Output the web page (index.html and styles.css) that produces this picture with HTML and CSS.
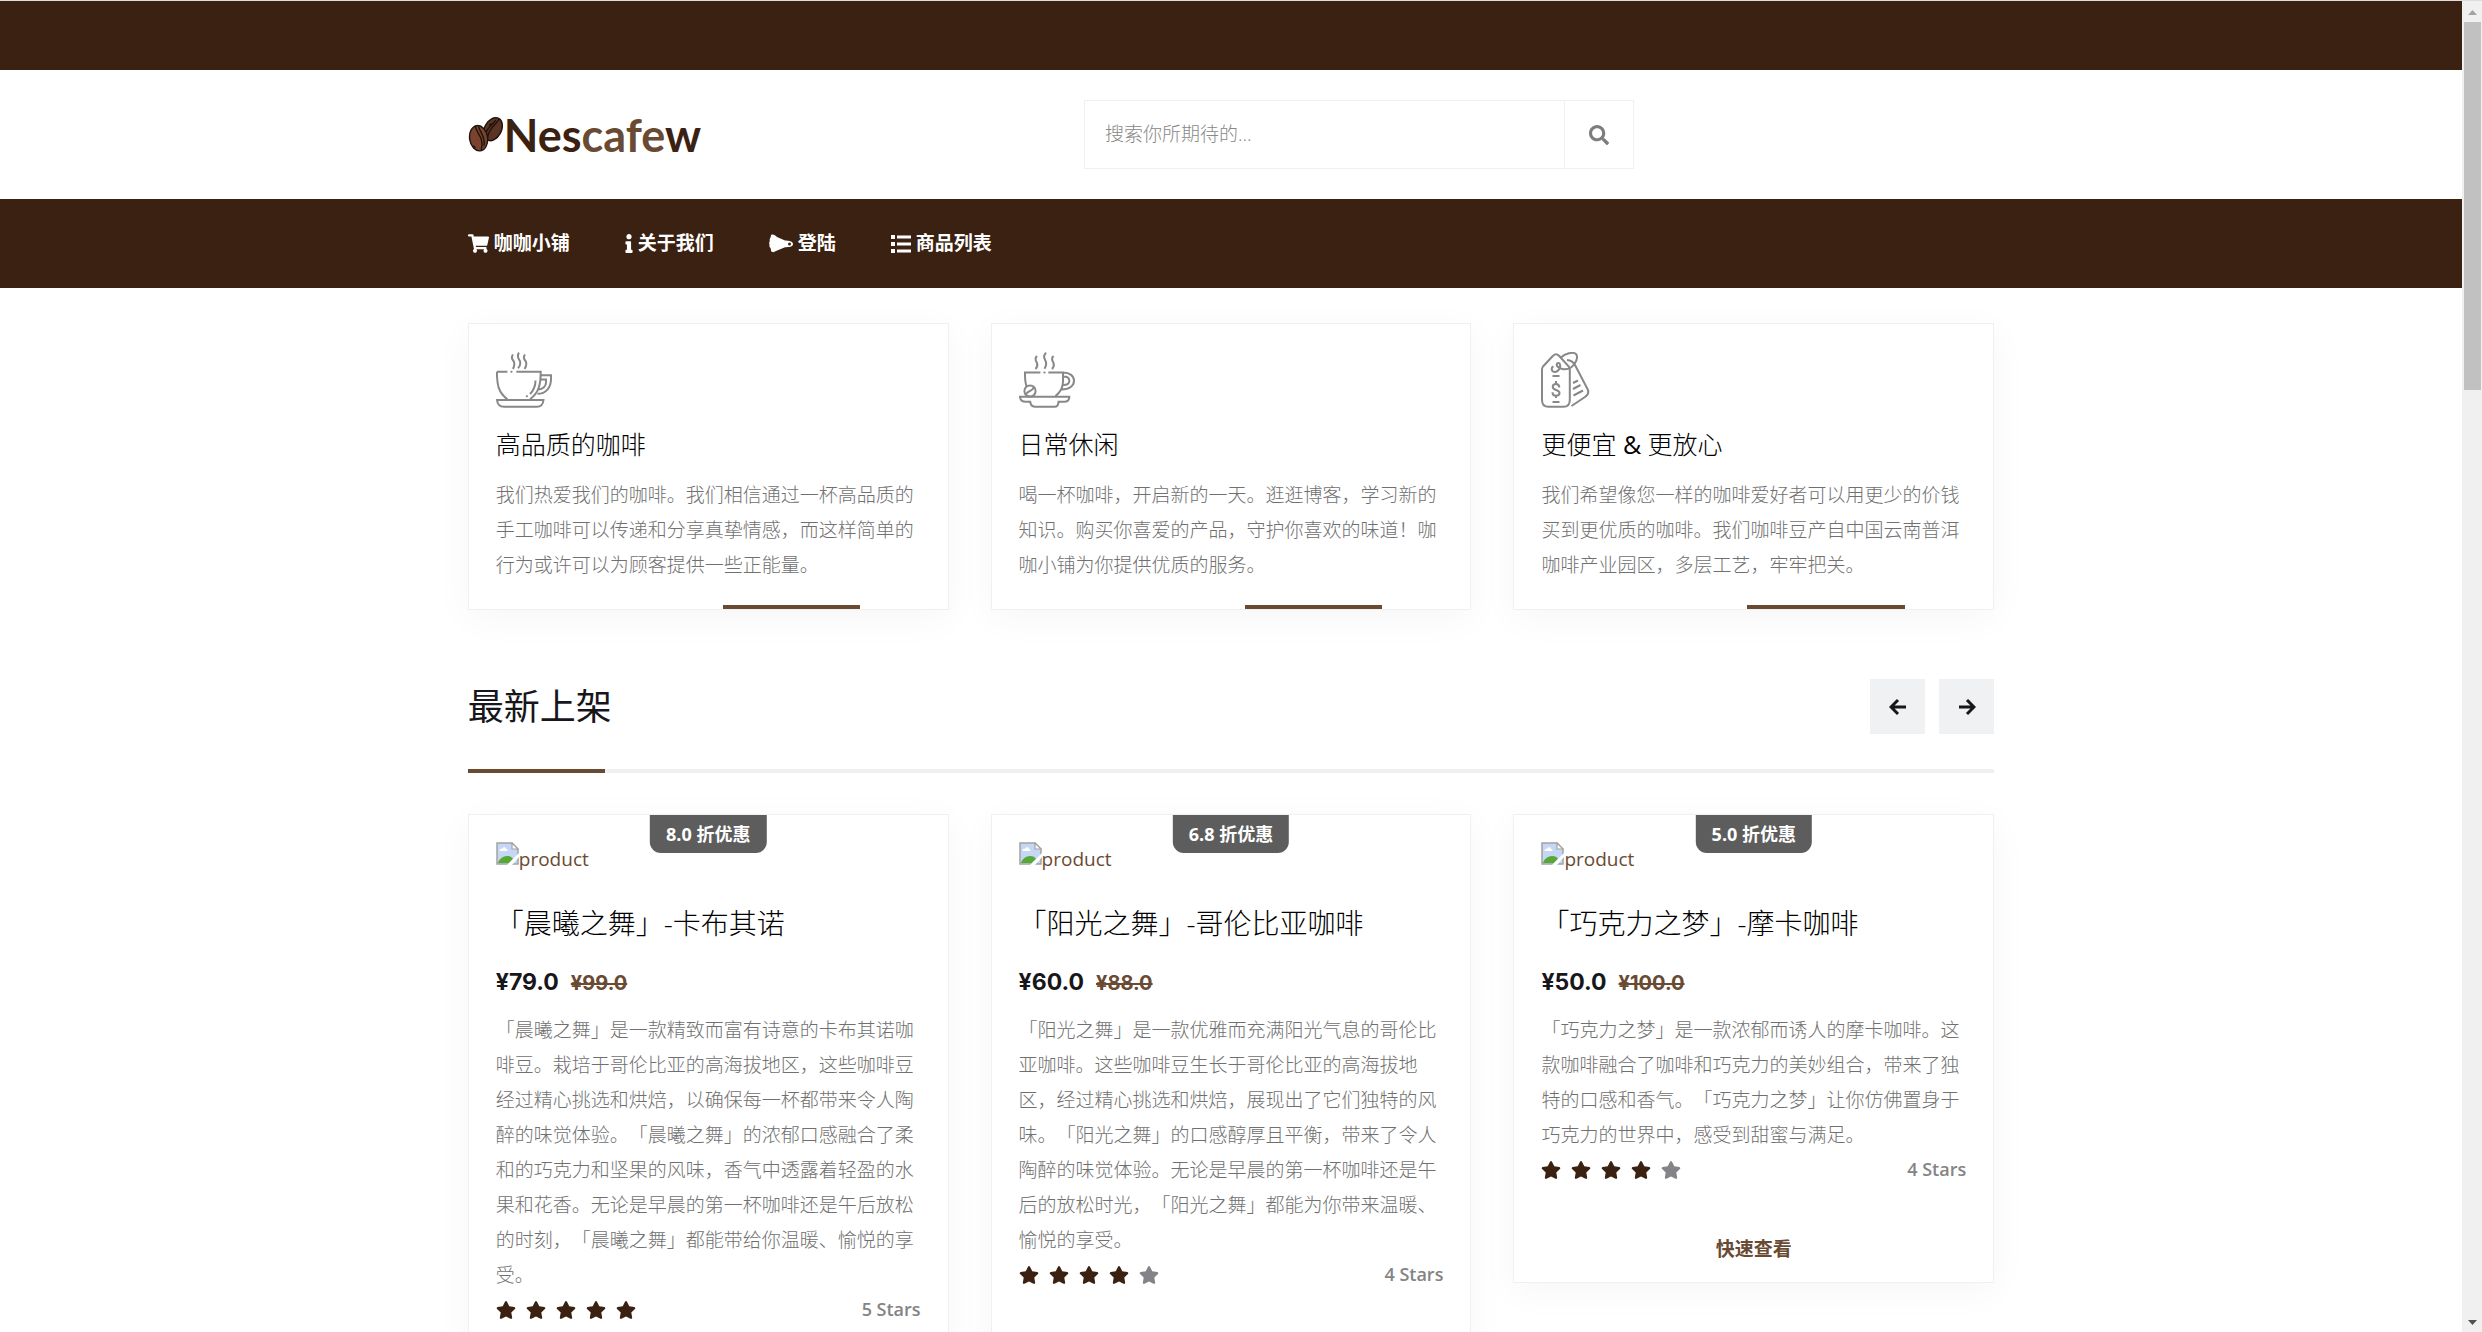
FILE: index.html
```html
<!DOCTYPE html>
<html lang="zh-CN">
<head>
<meta charset="utf-8">
<meta name="viewport" content="width=device-width, initial-scale=1">
<title>Nescafew</title>
<link rel="stylesheet" href="styles.css">
</head>
<body>
<svg class="sprite" aria-hidden="true">
  <symbol id="star" viewBox="0 0 576 512"><path d="M259.3 17.8L194 150.2 47.9 171.5c-26.2 3.8-36.7 36.1-17.7 54.6l105.7 103-25 145.5c-4.5 26.3 23.2 46 46.4 33.7L288 439.6l130.7 68.7c23.2 12.2 50.9-7.4 46.4-33.7l-25-145.5 105.7-103c19-18.5 8.5-50.8-17.7-54.6L382 150.2 316.7 17.8c-11.7-23.6-45.6-23.9-57.4 0z"/></symbol>
  <symbol id="missing" viewBox="0 0 23 23">
    <path d="M1 1h15l6 6v15H1z" fill="#c6d7f5" stroke="#a3a3a3" stroke-width="1.5"/>
    <path d="M16 1v6h6z" fill="#fff" stroke="#a3a3a3" stroke-width="1.2"/>
    <path d="M3.5 8.500c0-1.500 1.500-2 2.500-1.500 1-2.500 4-2 4 0 1.500 0 2 1.500 1 2H4.500c-.6 0-1-.2-1-.5z" fill="#fff"/>
    <path d="M2 21c1-4 5-7 9-7 3 0 5 1 6 3l-4 4z" fill="#56a935"/>
    <path d="M11 23L23 11v4l-7 8z" fill="#fff"/>
  </symbol>
</svg>
<div class="window">
  <div class="page">
    <div class="topbar"></div>
    <header class="header">
      <div class="container header-row">
        <a class="logo" href="#">
          <svg class="logo-beans" viewBox="0 0 33 33" aria-hidden="true">
            <g stroke="#1d120c" stroke-width="1.300">
              <ellipse cx="23.500" cy="11.500" rx="8" ry="11.500" transform="rotate(28 23.500 11.500)" fill="#5c3423"/>
              <path d="M29 2c-2 6-9 6-11 19M26 3c-3 5-8 7-9 12" fill="none"/>
              <ellipse cx="10" cy="20" rx="8.500" ry="12" transform="rotate(-8 10 20)" fill="#7a432d"/>
              <path d="M7 8c0 7 9 11 5.500 23M10 9c1 5 7 10 5 18" fill="none"/>
              <path d="M5 27l2 2M22 6l-2 2" fill="none"/>
            </g>
          </svg>
          <span class="logo-text">Nes<span class="logo-mid">cafe</span>w</span>
        </a>
        <form class="search">
          <input class="search-input" type="text" aria-label="搜索" placeholder="搜索你所期待的...">
          <button class="search-button" type="button" aria-label="搜索">
            <svg viewBox="0 0 512 512"><path d="M505 442.700L405.300 343c-4.500-4.500-10.600-7-17-7H372c27.600-35.300 44-79.700 44-128C416 93.100 322.900 0 208 0S0 93.100 0 208s93.100 208 208 208c48.300 0 92.700-16.400 128-44v16.300c0 6.400 2.500 12.500 7 17l99.700 99.700c9.400 9.400 24.600 9.400 33.900 0l28.300-28.300c9.400-9.400 9.400-24.600.1-34zM208 336c-70.700 0-128-57.200-128-128 0-70.700 57.200-128 128-128 70.700 0 128 57.200 128 128 0 70.700-57.200 128-128 128z"/></svg>
          </button>
        </form>
      </div>
    </header>
    <nav class="nav">
      <div class="container nav-row">
        <a class="nav-link" href="#"><svg width="21" height="19" viewBox="0 0 576 512"><path d="M528.120 301.319l47.273-208C578.806 78.301 567.391 64 551.990 64H159.208l-9.166-44.810C147.758 8.021 137.930 0 126.529 0H24C10.745 0 0 10.745 0 24v16c0 13.255 10.745 24 24 24h69.883l70.248 343.435C147.325 417.100 136 435.222 136 456c0 30.928 25.072 56 56 56s56-25.072 56-56c0-15.674-6.447-29.835-16.824-40h209.647C430.447 426.165 424 440.326 424 456c0 30.928 25.072 56 56 56s56-25.072 56-56c0-22.172-12.888-41.332-31.579-50.405l5.517-24.276c3.413-15.018-8.002-29.319-23.403-29.319H218.117l-6.545-32h293.145c11.206 0 20.920-7.754 23.403-18.681z"/></svg>咖咖小铺</a>
        <a class="nav-link" href="#"><svg width="8" height="19" viewBox="0 0 192 512"><path d="M20 424.229h20V279.771H20c-11.046 0-20-8.954-20-20V212c0-11.046 8.954-20 20-20h112c11.046 0 20 8.954 20 20v212.229h20c11.046 0 20 8.954 20 20V492c0 11.046-8.954 20-20 20H20c-11.046 0-20-8.954-20-20v-47.771c0-11.046 8.954-20 20-20zM96 0C56.235 0 24 32.235 24 72s32.235 72 72 72 72-32.235 72-72S135.764 0 96 0z"/></svg>关于我们</a>
        <a class="nav-link" href="#"><svg width="24" height="19" viewBox="0 0 24 19"><path fill-rule="evenodd" d="M2 1c2-1 4 0 6 2l8 3.500c3 0 8 .5 8 3.500s-4 3.200-8 3.200L7 17c-2 1.500-4 1.500-5 0 0-1 0-2-.5-3C.5 13 0 12 .6 11 0 10 0 8 .8 7 .4 5 1 4 1.600 3.500zM20.500 8.500a1.500 1.500 0 100 3 1.500 1.500 0 000-3z"/></svg>登陆</a>
        <a class="nav-link" href="#"><svg width="20" height="18" viewBox="0 0 20 18"><path d="M0 0h4v4H0zM6 .5h14v3H6zM0 7h4v4H0zM6 7.500h14v3H6zM0 14h4v4H0zM6 14.500h14v3H6z"/></svg>商品列表</a>
      </div>
    </nav>
    <main class="container">
      <section class="cards features">
        <article class="card feature">
          <svg class="feature-icon" viewBox="0 0 56 56" aria-hidden="true">
            <path d="M17 2.500c-3 4 0 5 1 7.500.8 2.500 0 5-1 7M23 .7c-3 4 0 6 1 8.500.8 3 0 5-2 7M29 2.500c-3 4 0 5 1 7.500.8 2.500 0 5-1.500 7M.900 19.700h10.500M20.400 19.700h24.300c0 12-1.500 21-10.700 27.500M.900 19.700c0 13 1.500 21 10.500 27.500M44.600 23.300H55v4c0 8-5 14.500-13.500 14.500M44.600 27.500H50v3c0 3.500-3 7-7.500 7M39.500 28.500c0 5.500-2 10-5.500 13.500M1 48h46.500c-.5 4.500-3 6.800-6.500 6.800H8c-4 0-6.500-2.300-7-6.800z"/>
            <path d="M15.300 19.700h.3M30.700 44.300h.3" stroke-linecap="round"/>
          </svg>
          <h3 class="feature-title">高品质的咖啡</h3>
          <p class="text">我们热爱我们的咖啡。我们相信通过一杯高品质的手工咖啡可以传递和分享真挚情感，而这样简单的行为或许可以为顾客提供一些正能量。</p>
        </article>
        <article class="card feature">
          <svg class="feature-icon" viewBox="0 0 56 56" aria-hidden="true">
            <path d="M18 4c-3 3-1 5 0 7 .8 2 .3 4-1.500 6M27 .7c-3 4-2 5-.5 8 1.200 3 1 5-1 8M34.500 4c-3 3-1 5 0 7 .8 2 .3 4-1.500 6M21.400 20.500H6c0 6-.2 9 1.600 14M29.300 20.500H44v9c0 6-3 11-7.500 14.500M44 20.500c7 0 11 3.500 11 8.300 0 5-4.500 8.700-12.500 8.700M44.300 24.500c4 0 6 1.500 6 4.200s-2 4.300-6 4.300M1 44.700h49.300c0 3-2 5-5 5h-5.800c0 3-1.500 5-4 5H15.700c-2.700 0-4.200-2-4.500-5H7c-4 0-6-2-6-5z"/>
            <path d="M25.300 20.500h.3" stroke-linecap="round"/>
            <circle cx="11" cy="39" r="5.600"/><path d="M7 42.500c2-5 6-2 8-7.500"/>
          </svg>
          <h3 class="feature-title">日常休闲</h3>
          <p class="text">喝一杯咖啡，开启新的一天。逛逛博客，学习新的知识。购买你喜爱的产品，守护你喜欢的味道！咖咖小铺为你提供优质的服务。</p>
        </article>
        <article class="card feature feature-wide">
          <svg class="feature-icon" viewBox="0 0 56 56" aria-hidden="true">
            <path d="M12 3.800L2 14.500C1.200 15.500 1 16 1 17.500V48c0 4.500 2.500 6.800 6.500 6.800h15c4 0 6.300-2.300 6.300-6.800V17.500c0-1.200-.4-2-1-3L18 3.800c-2-2.200-4-2.200-6 0zM20 5.500C24 1.500 32-.5 35 2c2.500 3 0 10-5 13.500-5 3-11 2-13.500-1-2-2.500.5-4.500 2-3 2 3-1 9-5 8.500-3.500-.5-3.500-5-1-5.500M26 8c3 .2 6 1.500 8 5l12.500 24c1.500 3 .5 6-2.500 8L30.500 54M11.500 24h7M11.500 50h7M32 31l5-2.500M32 37l7.500-4M32.500 43.500l9.500-5M15 29v3M15 43v3M18.300 35.500c0-2-1.300-3.500-3.300-3.500s-3.300 1.200-3.300 2.800c0 4 6.800 2.500 6.800 6.200 0 1.700-1.500 2.800-3.500 2.800s-3.500-1.500-3.500-3.500"/>
          </svg>
          <h3 class="feature-title">更便宜 <span class="amp">&amp;</span> 更放心</h3>
          <p class="text">我们希望像您一样的咖啡爱好者可以用更少的价钱买到更优质的咖啡。我们咖啡豆产自中国云南普洱咖啡产业园区，多层工艺，牢牢把关。</p>
        </article>
      </section>

      <div class="section-head">
        <h2 class="section-title">最新上架</h2>
        <div class="arrows">
          <button class="arrow" type="button" aria-label="上一页"><svg viewBox="0 0 18 18"><path d="M17 9H2M9 2L2 9l7 7"/></svg></button>
          <button class="arrow" type="button" aria-label="下一页"><svg viewBox="0 0 18 18"><path d="M1 9h15M9 2l7 7-7 7"/></svg></button>
        </div>
      </div>

      <section class="cards products">
        <article class="card product">
          <span class="badge">8.0 折优惠</span>
          <a class="picture" href="#"><svg width="23" height="23" aria-hidden="true"><use href="#missing"/></svg>product</a>
          <h3 class="product-title">「晨曦之舞」-卡布其诺</h3>
          <p class="price">¥79.0 <del class="old-price">¥99.0</del></p>
          <p class="text">「晨曦之舞」是一款精致而富有诗意的卡布其诺咖啡豆。栽培于哥伦比亚的高海拔地区，这些咖啡豆经过精心挑选和烘焙，以确保每一杯都带来令人陶醉的味觉体验。「晨曦之舞」的浓郁口感融合了柔和的巧克力和坚果的风味，香气中透露着轻盈的水果和花香。无论是早晨的第一杯咖啡还是午后放松的时刻，「晨曦之舞」都能带给你温暖、愉悦的享受。</p>
          <div class="rating">
            <span class="stars"><svg><use href="#star"/></svg><svg><use href="#star"/></svg><svg><use href="#star"/></svg><svg><use href="#star"/></svg><svg><use href="#star"/></svg></span>
            <span>5 Stars</span>
          </div>
          <a class="quick" href="#">快速查看</a>
        </article>
        <article class="card product">
          <span class="badge">6.8 折优惠</span>
          <a class="picture" href="#"><svg width="23" height="23" aria-hidden="true"><use href="#missing"/></svg>product</a>
          <h3 class="product-title">「阳光之舞」-哥伦比亚咖啡</h3>
          <p class="price">¥60.0 <del class="old-price">¥88.0</del></p>
          <p class="text">「阳光之舞」是一款优雅而充满阳光气息的哥伦比亚咖啡。这些咖啡豆生长于哥伦比亚的高海拔地区，经过精心挑选和烘焙，展现出了它们独特的风味。「阳光之舞」的口感醇厚且平衡，带来了令人陶醉的味觉体验。无论是早晨的第一杯咖啡还是午后的放松时光，「阳光之舞」都能为你带来温暖、愉悦的享受。</p>
          <div class="rating">
            <span class="stars"><svg><use href="#star"/></svg><svg><use href="#star"/></svg><svg><use href="#star"/></svg><svg><use href="#star"/></svg><svg class="star-off"><use href="#star"/></svg></span>
            <span>4 Stars</span>
          </div>
          <a class="quick" href="#">快速查看</a>
        </article>
        <article class="card product">
          <span class="badge">5.0 折优惠</span>
          <a class="picture" href="#"><svg width="23" height="23" aria-hidden="true"><use href="#missing"/></svg>product</a>
          <h3 class="product-title">「巧克力之梦」-摩卡咖啡</h3>
          <p class="price">¥50.0 <del class="old-price">¥100.0</del></p>
          <p class="text">「巧克力之梦」是一款浓郁而诱人的摩卡咖啡。这款咖啡融合了咖啡和巧克力的美妙组合，带来了独特的口感和香气。「巧克力之梦」让你仿佛置身于巧克力的世界中，感受到甜蜜与满足。</p>
          <div class="rating">
            <span class="stars"><svg><use href="#star"/></svg><svg><use href="#star"/></svg><svg><use href="#star"/></svg><svg><use href="#star"/></svg><svg class="star-off"><use href="#star"/></svg></span>
            <span>4 Stars</span>
          </div>
          <a class="quick" href="#">快速查看</a>
        </article>
      </section>
    </main>
  </div>
  <div class="scrollbar" aria-hidden="true">
    <svg class="scroll-arrow" viewBox="0 0 9 5"><path d="M0 5l4.500-5L9 5z" fill="#a3a3a3"/></svg>
    <div class="scroll-track"><div class="scroll-thumb"></div></div>
    <svg class="scroll-arrow" viewBox="0 0 9 5"><path d="M0 0h9L4.500 5z" fill="#505050"/></svg>
  </div>
</div>
</body>
</html>
```

FILE: styles.css
```css
:root {
  --dark: #3a2111;
  --brown: #694a32;
  --ink: #17161a;
  --grey: #707070;
  --line: #f0f0f0;
}

* { box-sizing: border-box; }

html { scrollbar-width: none; }

body {
  margin: 0;
  background: #fff;
  color: var(--grey);
  font: 300 19px/35px "Open Sans", "Noto Sans CJK SC", sans-serif;
  text-spacing-trim: space-all;
}

h2, h3, p { margin: 0; }
a { color: inherit; text-decoration: none; }
button { padding: 0; border: 0; font: inherit; cursor: pointer; }
svg { display: block; }

.sprite { position: absolute; width: 0; height: 0; }

.window {
  display: grid;
  grid-template-columns: minmax(0, 1fr) 20px;
  align-items: start;
  border-top: 1px solid #dedfdc;
}

.container {
  width: 62%;
  margin: 0 auto;
}

/* Header */
.topbar {
  height: 69px;
  background: var(--dark);
}

.header { padding: 30px 0; }

.header-row {
  display: grid;
  grid-template-columns: 616fr 550fr 360fr;
  align-items: center;
}

.logo {
  display: flex;
  align-items: center;
  gap: 1px;
  color: var(--dark);
}

.logo-beans { width: 35px; height: 35px; }

.logo-text {
  font: 700 45px/50px Lato, sans-serif;
}

.logo-mid { color: var(--brown); }

.search {
  display: flex;
  height: 69px;
  border: 1px solid var(--line);
}

.search-input {
  flex: 1;
  min-width: 0;
  padding: 0 20px;
  border: 0;
  background: none;
  font: inherit;
}

.search-input::placeholder { color: #888; }

.search-button {
  display: grid;
  place-items: center;
  width: 69px;
  border-left: 1px solid var(--line);
  background: none;
}

.search-button svg {
  width: 20px;
  fill: #7d7d7d;
}

.nav {
  padding: 27px 0;
  background: var(--dark);
  color: #fff;
  font-weight: 700;
}

.nav-row {
  display: flex;
  gap: 55px;
}

.nav-link {
  display: flex;
  align-items: center;
  gap: 5px;
}

.nav-link svg { fill: #fff; }

/* Cards */
.cards {
  display: grid;
  grid-template-columns: repeat(3, minmax(0, 1fr));
  align-items: start;
  gap: 42px;
}

.card {
  position: relative;
  padding: 28px 27px;
  border: 1px solid var(--line);
  background: #fff;
  box-shadow: 0 8px 36px rgba(0, 0, 0, 0.04);
}

.features { padding-top: 35px; }

.feature { padding-bottom: 26px; }

.feature::after {
  content: "";
  position: absolute;
  right: 88px;
  bottom: 0;
  width: 137px;
  height: 4px;
  background: var(--brown);
}

.feature-wide::after { width: 158px; }

.feature-icon {
  width: 56px;
  height: 56px;
  fill: none;
  stroke: #888;
  stroke-width: 2;
}

.feature-title {
  margin: 18px 0 16px;
  color: #000;
  font-weight: 300;
  font-size: 25px;
  line-height: 36px;
}

.amp { font-weight: 500; }

/* Section heading */
.section-head {
  display: flex;
  justify-content: space-between;
  align-items: center;
  position: relative;
  margin: 69px 0 41px;
  padding-bottom: 35px;
  border-bottom: 4px solid var(--line);
}

.section-head::after {
  content: "";
  position: absolute;
  left: 0;
  bottom: -4px;
  width: 9%;
  height: 4px;
  background: var(--brown);
}

.section-title {
  color: var(--ink);
  font-weight: 400;
  font-size: 36px;
  line-height: 55px;
}

.arrows {
  display: flex;
  gap: 14px;
}

.arrow {
  display: grid;
  place-items: center;
  width: 55px;
  height: 55px;
  background: #f0f1f3;
}

.arrow svg {
  width: 18px;
  fill: none;
  stroke: var(--ink);
  stroke-width: 3;
}

/* Products */
.product { padding: 27px 27px 15px; }

.badge {
  position: absolute;
  top: 0;
  left: 50%;
  transform: translateX(-50%);
  padding: 0 16px;
  border-radius: 0 0 11px 11px;
  background: #5d5d5d;
  color: #fff;
  font-weight: 700;
  font-size: 18px;
  line-height: 38px;
  white-space: nowrap;
}

.picture {
  display: flex;
  align-items: flex-start;
  color: var(--brown);
  font-weight: 400;
}

.product-title {
  margin-top: 26px;
  color: #000;
  font-weight: 300;
  font-size: 28px;
  line-height: 40px;
}

.price {
  display: flex;
  align-items: baseline;
  gap: 12px;
  margin: 21px 0 12px;
  color: var(--ink);
  font: 700 23px/36px Inter, sans-serif;
}

.old-price {
  color: var(--brown);
  font-size: 20px;
}

.rating {
  display: flex;
  justify-content: space-between;
  margin-top: -1px;
  color: #848484;
  font-weight: 600;
  font-size: 18px;
}

.stars {
  display: flex;
  align-items: center;
  gap: 10px;
}

.stars svg {
  width: 20px;
  height: 18px;
  fill: var(--dark);
}

.stars .star-off { fill: #848488; }

.quick {
  display: block;
  margin-top: 45px;
  color: var(--brown);
  font-weight: 700;
  text-align: center;
}

/* Scrollbar */
.scrollbar {
  position: sticky;
  top: 0;
  display: flex;
  flex-direction: column;
  align-items: center;
  gap: 7px;
  height: 100vh;
  padding: 9px 0 8px;
  background: #f0f0f0;
}

.scroll-arrow { width: 9px; height: 5px; }

.scroll-track {
  flex: 1;
  width: 17px;
}

.scroll-thumb {
  height: 28.5%;
  background: #c1c1c1;
}
```
